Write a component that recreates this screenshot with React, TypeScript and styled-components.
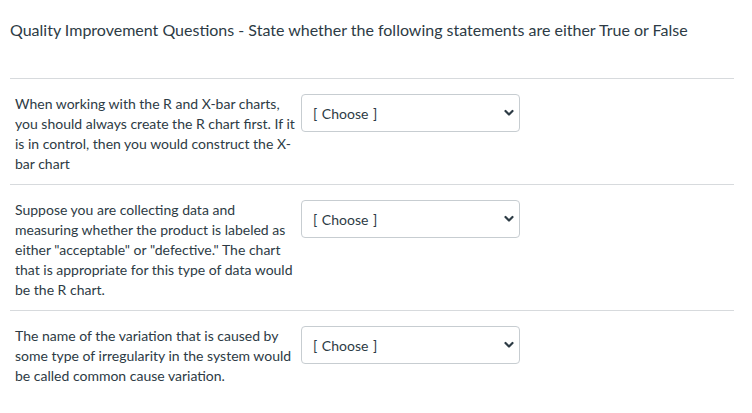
import React from "react";
import styled, { createGlobalStyle } from "styled-components";

const Global = createGlobalStyle`
  html, body { margin: 0; padding: 0; background: #ffffff; }
  body { font-family: Lato, "Noto Sans", "Liberation Sans", sans-serif; color: #2d3b45; }
`;

const Page = styled.div`
  padding: 18px 18px 10px 10px;
`;

const Title = styled.h2`
  margin: 0 0 36px 0;
  font-size: 16px;
  line-height: 24px;
  font-weight: 400;
  color: #2d3b45;
`;

const Row = styled.div`
  display: flex;
  align-items: flex-start;
  gap: 5px;
  border-top: 1px solid #d7dadd;
  padding: 15px 0 10px 5px;
`;

const Statement = styled.div`
  width: 281px;
  font-size: 14px;
  line-height: 20px;
  color: #2d3b45;
`;

const SelectWrap = styled.div`
  position: relative;
  width: 219px;
  height: 38px;
`;

const Select = styled.select`
  appearance: none;
  -webkit-appearance: none;
  width: 100%;
  height: 100%;
  box-sizing: border-box;
  border: 1px solid #c7cdd1;
  border-radius: 4px;
  background: #ffffff;
  padding: 0 28px 0 11px;
  font-family: Lato, "Noto Sans", "Liberation Sans", sans-serif;
  font-size: 14px;
  word-spacing: 1px;
  color: #2d3b45;
  outline: none;
`;

const Chevron = styled.svg`
  position: absolute;
  right: 6px;
  top: 50%;
  margin-top: -4px;
  width: 10px;
  height: 8px;
  pointer-events: none;
`;

const questions = [
  "When working with the R and X-bar charts, you should always create the R chart first. If it is in control, then you would construct the X-bar chart",
  'Suppose you are collecting data and measuring whether the product is labeled as either "acceptable" or "defective." The chart that is appropriate for this type of data would be the R chart.',
  "The name of the variation that is caused by some type of irregularity in the system would be called common cause variation.",
];

export default function App() {
  return (
    <>
      <Global />
      <Page>
        <Title>Quality Improvement Questions - State whether the following statements are either True or False</Title>
        {questions.map((q, i) => (
          <Row key={i}>
            <Statement>{q}</Statement>
            <SelectWrap>
              <Select defaultValue="">
                <option value="">[ Choose ]</option>
                <option value="true">True</option>
                <option value="false">False</option>
              </Select>
              <Chevron viewBox="0 0 10 8">
                <path d="M1.5 2 L5 5.5 L8.5 2" fill="none" stroke="#2d3b45" strokeWidth="2.2" strokeLinecap="round" strokeLinejoin="round" />
              </Chevron>
            </SelectWrap>
          </Row>
        ))}
      </Page>
    </>
  );
}
